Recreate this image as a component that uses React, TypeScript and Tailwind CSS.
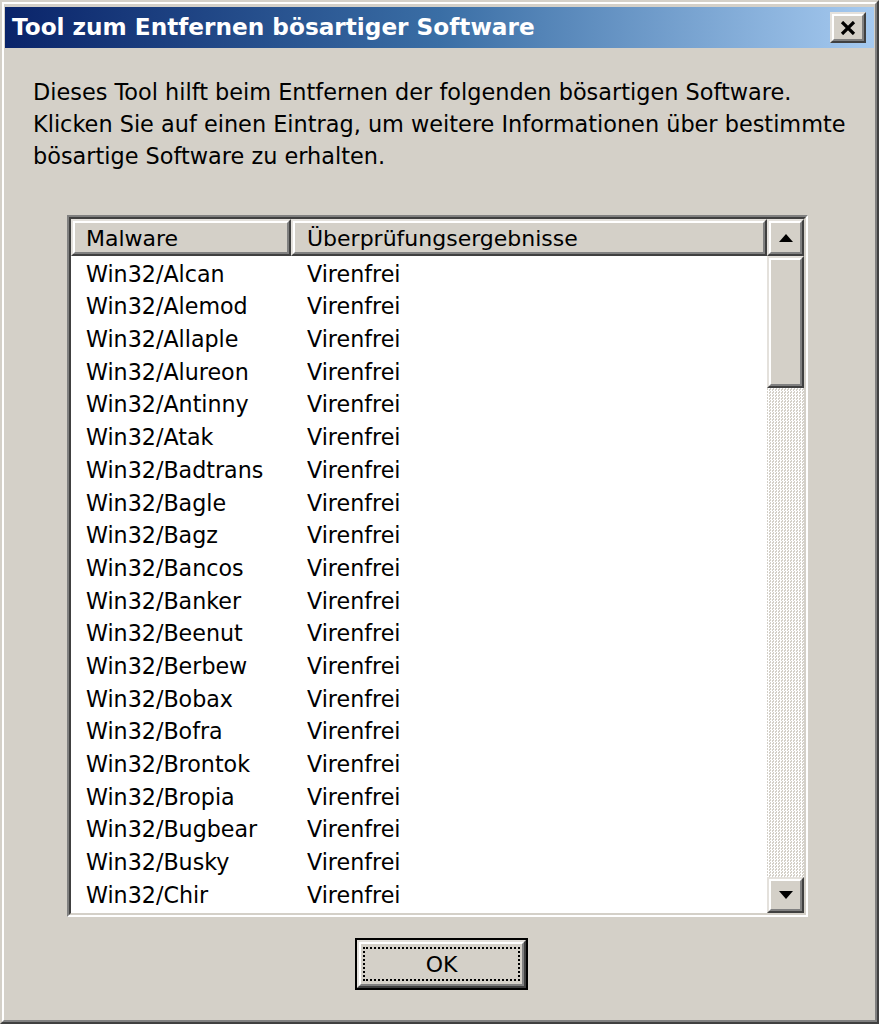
import React from "react";

const rows = [
  "Alcan","Alemod","Allaple","Alureon","Antinny","Atak","Badtrans","Bagle","Bagz","Bancos",
  "Banker","Beenut","Berbew","Bobax","Bofra","Brontok","Bropia","Bugbear","Busky","Chir",
];

function Raised({ className = "", children }: { className?: string; children?: React.ReactNode }) {
  return (
    <div className={"border-[2px] border-t-[#e4e1dc] border-l-[#e4e1dc] border-r-[#404040] border-b-[#404040] " + className}>
      <div className="w-full h-full border-[2px] border-t-white border-l-white border-r-[#808080] border-b-[#808080] bg-[#d4d0c8] flex items-center justify-center">
        {children}
      </div>
    </div>
  );
}

export default function App() {
  const font = { fontFamily: '"DejaVu Sans", Verdana, sans-serif' };
  return (
    <div className="w-[879px] h-[1024px] bg-[#d4d0c8] text-black" style={font}>
      <div className="w-full h-full border-[2px] border-t-[#d4d0c8] border-l-[#d4d0c8] border-r-[#404040] border-b-[#404040]">
        <div className="w-full h-full border-[2px] border-t-white border-l-white border-r-[#808080] border-b-[#808080] flex flex-col pt-[3px] px-[1px]">
          {/* Title bar */}
          <div className="h-[41px] flex items-center justify-between pl-[7px] pr-[8px] bg-[linear-gradient(90deg,#0a246a_0%,#3a6ea5_50%,#a6caf0_100%)]">
            <span className="text-white font-bold text-[23.2px] tracking-[0px]">Tool zum Entfernen bösartiger Software</span>
            <Raised className="w-[36px] h-[31px]">
              <svg width="16" height="14" viewBox="0 0 16 14">
                <path d="M2 1 L14 13 M14 1 L2 13" stroke="#000" strokeWidth="3.2" />
              </svg>
            </Raised>
          </div>

          {/* Description */}
          <div className="pl-[28px] mt-[28px] text-[22.4px] leading-[32px]">
            <p>Dieses Tool hilft beim Entfernen der folgenden bösartigen Software.</p>
            <p>Klicken Sie auf einen Eintrag, um weitere Informationen über bestimmte</p>
            <p>bösartige Software zu erhalten.</p>
          </div>

          {/* List view */}
          <div className="ml-[62px] mt-[43px] w-[741px] h-[702px] border-[2px] border-t-[#808080] border-l-[#808080] border-r-white border-b-white">
            <div className="w-full h-full border-[2px] border-t-[#404040] border-l-[#404040] border-r-[#d4d0c8] border-b-[#d4d0c8] flex bg-white">
              <div className="flex-1 flex flex-col overflow-hidden">
                <div className="flex h-[37px] shrink-0">
                  <Raised className="w-[220px] h-[37px]">
                    <div className="w-full pl-[11px] pt-[2px] text-[22px]">Malware</div>
                  </Raised>
                  <Raised className="flex-1 h-[37px]">
                    <div className="w-full pl-[12px] pt-[2px] text-[22px]">Überprüfungsergebnisse</div>
                  </Raised>
                </div>
                <div className="flex flex-col pt-[2px]">
                  {rows.map((r) => (
                    <div key={r} className="flex h-[32.7px] items-center text-[22.2px]">
                      <div className="w-[220px] pl-[15px]">Win32/{r}</div>
                      <div className="pl-[16px]">Virenfrei</div>
                    </div>
                  ))}
                </div>
              </div>
              {/* Scrollbar */}
              <div className="w-[37px] flex flex-col shrink-0 bg-[#d4d0c8]">
                <Raised className="w-[37px] h-[37px] shrink-0">
                  <svg width="14" height="8" viewBox="0 0 14 8">
                    <path d="M7 0 L14 8 L0 8 Z" fill="#000" />
                  </svg>
                </Raised>
                <Raised className="w-[37px] h-[132px] shrink-0" />
                <div className="flex-1 bg-[repeating-conic-gradient(#ffffff_0%_25%,#d4d0c8_0%_50%)] bg-[length:3px_3px]" />
                <Raised className="w-[37px] h-[36px] shrink-0">
                  <svg width="14" height="8" viewBox="0 0 14 8">
                    <path d="M0 0 L14 0 L7 8 Z" fill="#000" />
                  </svg>
                </Raised>
              </div>
            </div>
          </div>

          {/* OK button */}
          <div className="mt-[21px] ml-[350px]">
            <div className="w-[173px] h-[52px] border-[2px] border-black">
              <Raised className="w-full h-full">
                <div className="w-[157px] h-[34px] border-[2px] border-dotted border-black flex items-center justify-center text-[22px]">
                  OK
                </div>
              </Raised>
            </div>
          </div>
        </div>
      </div>
    </div>
  );
}
